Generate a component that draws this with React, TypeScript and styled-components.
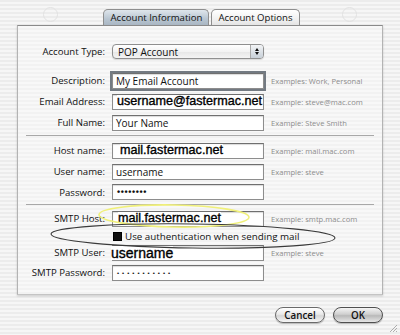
import React, {FC} from 'react';
import styled, {createGlobalStyle} from 'styled-components';

const GlobalStyle = createGlobalStyle`
    html, body {
        margin: 0;
        padding: 0;
        background: #efefef;
    }
`;

const UI = `"Open Sans", "DejaVu Sans", sans-serif`;
const PASTE = `"Liberation Sans", Arial, sans-serif`;

const Window = styled.div`
    position: relative;
    width: 400px;
    height: 335px;
    overflow: hidden;
    background: repeating-linear-gradient(#ececec 0 2px, #f6f6f6 2px 4px);
    font-family: ${UI};
    color: #111;
`;

const TopBar = styled.div`
    display: grid;
    grid-template-columns: 1fr auto 1fr;
    align-items: end;
    height: 25px;
`;

const GhostIcon = styled.div`
    justify-self: center;
    align-self: start;
    margin-top: 7px;
    width: 13px;
    height: 13px;
    border: 1px solid #e2e2e2;
    border-radius: 50%;
`;

const Tabs = styled.div`
    display: flex;
    gap: 2px;
    margin-left: 3px;
`;

const Tab = styled.div<{$active?: boolean}>`
    height: 15px;
    padding: 0 ${p => (p.$active ? 6 : 6)}px;
    display: flex;
    align-items: center;
    font-size: 9.6px;
    border: 1px solid #8e8e8e;
    border-bottom: none;
    border-radius: 5px 5px 0 0;
    color: #111;
    background: ${p =>
        p.$active
            ? 'linear-gradient(#dfe6ec, #b8c5d1 60%, #a9b6c3)'
            : 'linear-gradient(#ffffff, #f1f1f1 60%, #e4e4e4)'};
`;

const Panel = styled.section`
    margin: 0 17px;
    height: 270px;
    box-sizing: border-box;
    border: 1px solid #b3b3b3;
    border-top-color: #8a8a8a;
    border-bottom-color: #c4c4c4;
    box-shadow: 0 1px 2px rgba(0, 0, 0, 0.18);
    background: repeating-linear-gradient(#f8f8f8 0 2px, #f2f2f2 2px 4px);
    padding: 15px 0 0;
    display: flex;
    flex-direction: column;
`;

const Row = styled.div<{$h?: number; $mt?: number}>`
    display: grid;
    grid-template-columns: 87px 152px 1fr;
    column-gap: 7px;
    align-items: center;
    height: ${p => p.$h ?? 21}px;
    margin-top: ${p => p.$mt ?? 0}px;
`;

const Label = styled.label`
    text-align: right;
    font-size: 9.6px;
    white-space: nowrap;
`;

const Field = styled.div<{$focus?: boolean}>`
    box-sizing: border-box;
    height: 16px;
    background: #fff;
    border: 1px solid #8d8d8d;
    border-top-color: #6f6f6f;
    box-shadow: ${p =>
        p.$focus ? '0 0 0 2px #737a82, inset 0 1px 1px rgba(0,0,0,0.15)' : 'inset 0 1px 1px rgba(0,0,0,0.15)'};
    display: flex;
    align-items: center;
    padding-left: 3px;
    font-size: 10px;
    white-space: nowrap;
    overflow: visible;
`;

const Pasted = styled.span<{$size?: number; $shift?: number}>`
    font-family: ${PASTE};
    font-size: ${p => p.$size ?? 12.6}px;
    -webkit-text-stroke: 0.35px #000;
    color: #000;
    margin-left: ${p => p.$shift ?? 0}px;
    background: #fff;
    line-height: 1;
`;

const Dots = styled.span<{$spacing: number; $size: number}>`
    font-family: ${PASTE};
    font-size: ${p => p.$size}px;
    letter-spacing: ${p => p.$spacing}px;
    font-weight: bold;
    margin-left: 1px;
`;

const Example = styled.span`
    font-size: 7.6px;
    color: #8c8c8c;
    white-space: nowrap;
`;

const Popup = styled.div`
    box-sizing: border-box;
    height: 15px;
    border: 1px solid #8f8f8f;
    border-radius: 4px;
    background: linear-gradient(#ffffff, #f3f3f3 50%, #e6e6e6 51%, #f4f4f4);
    display: flex;
    align-items: center;
    padding-left: 5px;
    font-size: 10px;
    box-shadow: 0 1px 1px rgba(0, 0, 0, 0.12);
`;

const PopupText = styled.span`
    flex: 1;
`;

const Stepper = styled.div`
    width: 12px;
    height: 13px;
    border-left: 1px solid #a9a9a9;
    border-radius: 0 3px 3px 0;
    background: linear-gradient(#f2f4f6, #c8d0d8);
    display: flex;
    flex-direction: column;
    align-items: center;
    justify-content: center;
    gap: 1px;
`;

const Arrow = styled.div<{$down?: boolean}>`
    width: 0;
    height: 0;
    border-left: 2px solid transparent;
    border-right: 2px solid transparent;
    ${p => (p.$down ? 'border-top: 3px solid #111;' : 'border-bottom: 3px solid #111;')}
`;

const Separator = styled.hr<{$mt: number; $mb: number}>`
    margin: ${p => p.$mt}px 8px ${p => p.$mb}px;
    border: none;
    border-top: 1px solid #a8a8a8;
    height: 0;
`;

const CheckLine = styled.div`
    display: flex;
    align-items: center;
    gap: 3px;
    font-size: 9.8px;
    white-space: nowrap;
    margin-left: 1px;
`;

const Box = styled.span`
    display: inline-block;
    flex: 0 0 9px;
    width: 9px;
    height: 9px;
    background: #111;
    border: 1px solid #000;
    box-sizing: border-box;
`;

const Footer = styled.div`
    display: flex;
    justify-content: flex-end;
    gap: 8px;
    padding: 12px 17px 0 0;
`;

const PushButton = styled.button<{$default?: boolean}>`
    width: 50px;
    height: 16px;
    border-radius: 8px;
    border: 1px solid ${p => (p.$default ? '#4f4f4f' : '#6a6a6a')};
    background: ${p =>
        p.$default
            ? 'linear-gradient(#f4f4f4, #cfcfcf 45%, #b9b9b9 55%, #e6e6e6)'
            : 'linear-gradient(#ffffff, #e9e9e9 45%, #d6d6d6 55%, #f6f6f6)'};
    box-shadow: 0 1px 1px rgba(0, 0, 0, 0.25);
    font-family: ${UI};
    font-size: 9.8px;
    font-weight: 600;
    color: #111;
    padding: 0;
`;

const Annotations = styled.svg`
    position: absolute;
    left: 0;
    top: 0;
    pointer-events: none;
`;

const Grip = styled.svg`
    position: absolute;
    right: 2px;
    bottom: 2px;
`;

const App: FC = () => (
    <Window>
        <GlobalStyle />
        <TopBar>
            <GhostIcon />
            <Tabs>
                <Tab $active>Account Information</Tab>
                <Tab>Account Options</Tab>
            </Tabs>
            <GhostIcon />
        </TopBar>
        <Panel>
            <Row>
                <Label>Account Type:</Label>
                <Popup>
                    <PopupText>POP Account</PopupText>
                    <Stepper>
                        <Arrow />
                        <Arrow $down />
                    </Stepper>
                </Popup>
            </Row>
            <Row $mt={8}>
                <Label>Description:</Label>
                <Field $focus>My Email Account</Field>
                <Example>Examples: Work, Personal</Example>
            </Row>
            <Row>
                <Label>Email Address:</Label>
                <Field>
                    <Pasted $shift={1}>username@fastermac.net</Pasted>
                </Field>
                <Example>Example: steve@mac.com</Example>
            </Row>
            <Row>
                <Label>Full Name:</Label>
                <Field>Your Name</Field>
                <Example>Example: Steve Smith</Example>
            </Row>
            <Separator $mt={2} $mb={4} />
            <Row>
                <Label>Host name:</Label>
                <Field>
                    <Pasted $shift={4}>mail.fastermac.net</Pasted>
                </Field>
                <Example>Example: mail.mac.com</Example>
            </Row>
            <Row>
                <Label>User name:</Label>
                <Field>username</Field>
                <Example>Example: steve</Example>
            </Row>
            <Row $h={20}>
                <Label>Password:</Label>
                <Field>
                    <Dots $size={9} $spacing={0.6}>••••••••</Dots>
                </Field>
            </Row>
            <Separator $mt={2} $mb={3} />
            <Row>
                <Label>SMTP Host:</Label>
                <Field>
                    <Pasted $shift={2}>mail.fastermac.net</Pasted>
                </Field>
                <Example>Example: smtp.mac.com</Example>
            </Row>
            <Row $h={14}>
                <span />
                <CheckLine>
                    <Box />
                    Use authentication when sending mail
                </CheckLine>
            </Row>
            <Row $h={19}>
                <Label>SMTP User:</Label>
                <Field>
                    <Pasted $size={14} $shift={-5}>username</Pasted>
                </Field>
                <Example>Example: steve</Example>
            </Row>
            <Row>
                <Label>SMTP Password:</Label>
                <Field>
                    <Dots $size={6} $spacing={3}>•••••••••••</Dots>
                </Field>
            </Row>
        </Panel>
        <Footer>
            <PushButton>Cancel</PushButton>
            <PushButton $default>OK</PushButton>
        </Footer>
        <Annotations width="400" height="335" viewBox="0 0 400 335">
            <ellipse cx="174" cy="216" rx="75" ry="11" fill="none" stroke="#f0f07a" strokeWidth="1.6" transform="rotate(1 174 216)" />
            <ellipse cx="193" cy="236" rx="142" ry="12" fill="none" stroke="#3a3a3a" strokeWidth="1.1" transform="rotate(0.8 193 236)" />
        </Annotations>
        <Grip width="9" height="9" viewBox="0 0 9 9">
            <path d="M8 1 L1 8 M8 4 L4 8 M8 7 L7 8" stroke="#9a9a9a" strokeWidth="0.8" />
        </Grip>
    </Window>
);

export default App;
